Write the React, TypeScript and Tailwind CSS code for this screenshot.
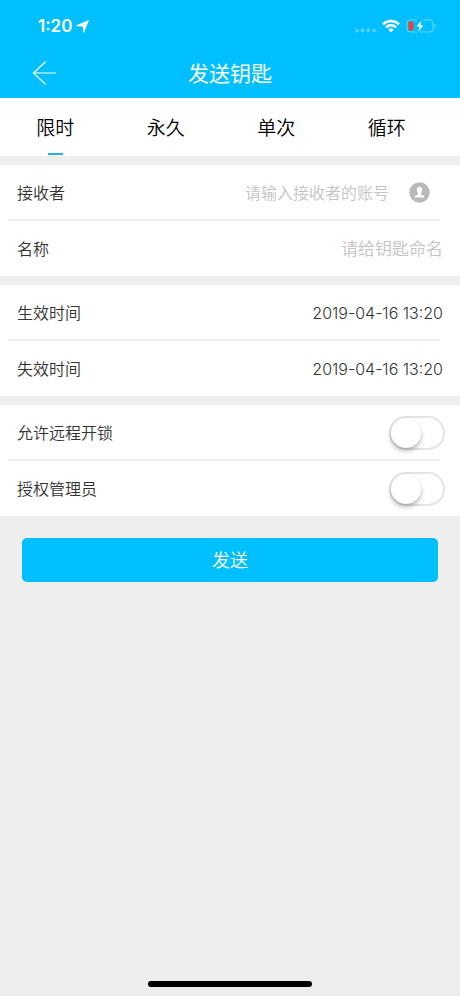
import { useState } from "react";
import type { ReactNode } from "react";

const TABS = ["限时", "永久", "单次", "循环"];

function StatusBar() {
  return (
    <div className="flex h-12 items-center pt-1 pr-6 pl-[38px]">
      <span className="text-[17px] leading-5 font-semibold">1:20</span>
      <svg className="ml-1 h-[13px] w-[13px]" viewBox="0 0 12 12" fill="currentColor" aria-hidden="true">
        <path d="M11.200.2Q12.100-.1 11.800.8L7.500 11.300Q7 12.200 6.700 11.200L6.300 6.500Q6.300 6.200 6 6.100L.8 5.700Q-.2 5.400.7 4.900Z" />
      </svg>

      <div className="ml-auto flex items-center gap-1.5">
        <svg className="h-[14px] w-[21px] opacity-30" viewBox="0 0 21 14" fill="currentColor" aria-hidden="true">
          <circle cx="2" cy="11.500" r="1.900" />
          <circle cx="7.700" cy="11.500" r="1.900" />
          <circle cx="13.300" cy="11.500" r="1.900" />
          <circle cx="19" cy="11.500" r="1.900" />
        </svg>
        <svg className="h-[14px] w-[18px]" viewBox="0 0 18 14" aria-hidden="true">
          <g fill="none" stroke="currentColor" strokeWidth="2.500">
            <path d="M1 5.300a11.300 11.300 0 0 1 16 0" />
            <path d="M4 8.400a7 7 0 0 1 10 0" />
          </g>
          <path d="M9 13.500 6.300 10.700a3.800 3.800 0 0 1 5.400 0Z" fill="currentColor" />
        </svg>
        <svg className="h-[14px] w-[30px]" viewBox="0 0 30 14" aria-hidden="true">
          <path
            d="M11 .9H4A3 3 0 0 0 1 4v6a3 3 0 0 0 3 3h7M17 .9h7A3 3 0 0 1 27 4v6a3 3 0 0 1-3 3H14"
            fill="none"
            stroke="currentColor"
            strokeOpacity="0.4"
          />
          <path d="M28.500 4.900v4.200c.8-.3 1.300-1.100 1.300-2.100s-.5-1.800-1.300-2.100Z" fill="currentColor" fillOpacity="0.4" />
          <rect x="2.500" y="2.500" width="5" height="9" rx="1.500" fill="#e8433f" />
          <path d="M15.500 1.200 10.700 7.600h3L12.300 12.800l5.100-6.600h-3.100Z" fill="currentColor" />
        </svg>
      </div>
    </div>
  );
}

function Group({ children }: { children: ReactNode }) {
  return <section className="mt-[9px] bg-white">{children}</section>;
}

function Divider() {
  return <div className="-mt-px mr-5 ml-2 h-0.5 bg-[#efefef]" />;
}

interface RowProps {
  id: string;
  label: string;
  children: ReactNode;
}

function Row({ id, label, children }: RowProps) {
  return (
    <div className="flex h-[55px] items-center pr-[17px] pl-[17px]">
      <label htmlFor={id} className="shrink-0 text-base font-[350] text-[#333]">
        {label}
      </label>
      {children}
    </div>
  );
}

function TimeField({ id, label, value }: { id: string; label: string; value: string }) {
  return (
    <Row id={id} label={label}>
      <input
        id={id}
        readOnly
        value={value}
        className="min-w-0 flex-1 text-right text-base font-[350] text-[#333] outline-none"
      />
    </Row>
  );
}

function SwitchField({ id, label }: { id: string; label: string }) {
  const [checked, setChecked] = useState(false);

  return (
    <Row id={id} label={label}>
      <input
        id={id}
        type="checkbox"
        role="switch"
        checked={checked}
        onChange={(e) => setChecked(e.target.checked)}
        className="-mr-0.5 ml-auto h-[34px] w-14 cursor-pointer appearance-none rounded-full border-2 border-[#e4e4e4] bg-white transition-colors before:block before:h-[30px] before:w-[30px] before:rounded-full before:bg-white before:shadow-[0_3px_5px_rgba(0,0,0,0.28)] before:transition-transform checked:border-[#00bfff] checked:bg-[#00bfff] checked:before:translate-x-[22px]"
      />
    </Row>
  );
}

export default function App() {
  const [activeTab, setActiveTab] = useState(0);
  const [receiver, setReceiver] = useState("");
  const [keyName, setKeyName] = useState("");

  return (
    <div className="flex min-h-screen flex-col bg-[#eee] font-[Inter,'Noto_Sans_CJK_SC',sans-serif]">
      <header className="bg-[#00bfff] text-white">
        <StatusBar />
        <div className="grid h-[50px] grid-cols-[1fr_auto_1fr] items-center">
          <button type="button" aria-label="返回" className="ml-8 w-6 cursor-pointer">
            <svg className="h-6 w-6" viewBox="0 0 24 24" fill="none" stroke="currentColor" strokeWidth="1.200" aria-hidden="true">
              <path d="M13.500.8 1.500 12l12 11.200M1.500 12H24" />
            </svg>
          </button>
          <h1 className="pt-0.5 text-[21px] font-normal">发送钥匙</h1>
        </div>
      </header>

      <nav className="flex bg-white pr-[18px]">
        {TABS.map((tab, index) => (
          <button
            key={tab}
            type="button"
            onClick={() => setActiveTab(index)}
            className="flex h-[58px] flex-1 cursor-pointer flex-col items-center text-[19px] font-[350] text-black"
          >
            <span className="flex flex-1 items-center pt-2">{tab}</span>
            <span className={`mb-px h-0.5 w-[15px] ${activeTab === index ? "bg-[#1fb4ea]" : "bg-transparent"}`} />
          </button>
        ))}
      </nav>

      <main>
        <Group>
          <Row id="receiver" label="接收者">
            <input
              id="receiver"
              value={receiver}
              onChange={(e) => setReceiver(e.target.value)}
              placeholder="请输入接收者的账号"
              className="min-w-0 flex-1 text-right text-base font-[350] text-[#333] outline-none placeholder:text-[#c4c4c4]"
            />
            <button type="button" aria-label="选择联系人" className="mr-[13px] ml-5 shrink-0 cursor-pointer">
              <svg className="h-[21px] w-[21px]" viewBox="0 0 21 21" aria-hidden="true">
                <circle cx="10.500" cy="10.500" r="10.200" fill="#b9b9b9" />
                <path
                  d="M10.500 4.800c-1.700 0-2.600 1.200-2.600 2.900 0 1.500.4 2.700 1 3.600v1.300c-.4.600-3.200.7-3.200 1.900v.9h9.600v-.9c0-1.200-2.800-1.300-3.200-1.900v-1.300c.6-.9 1-2.100 1-3.600 0-1.700-.9-2.900-2.600-2.900Z"
                  fill="#fff"
                />
              </svg>
            </button>
          </Row>
          <Divider />
          <Row id="key-name" label="名称">
            <input
              id="key-name"
              value={keyName}
              onChange={(e) => setKeyName(e.target.value)}
              placeholder="请给钥匙命名"
              className="min-w-0 flex-1 pt-0.5 text-right text-[17px] font-[350] text-[#333] outline-none placeholder:text-[#c4c4c4]"
            />
          </Row>
        </Group>

        <Group>
          <TimeField id="start-time" label="生效时间" value="2019-04-16 13:20" />
          <Divider />
          <TimeField id="end-time" label="失效时间" value="2019-04-16 13:20" />
        </Group>

        <Group>
          <SwitchField id="remote-unlock" label="允许远程开锁" />
          <Divider />
          <SwitchField id="authorized-admin" label="授权管理员" />
        </Group>

        <div className="px-[22px] pt-[22px]">
          <button
            type="button"
            className="h-11 w-full cursor-pointer rounded-[5px] bg-[#00bfff] pt-0.5 text-lg font-[350] text-white"
          >
            发送
          </button>
        </div>
      </main>

      <div className="mx-auto mt-auto mb-[9px] h-1.5 w-[164px] rounded-full bg-black" />
    </div>
  );
}
